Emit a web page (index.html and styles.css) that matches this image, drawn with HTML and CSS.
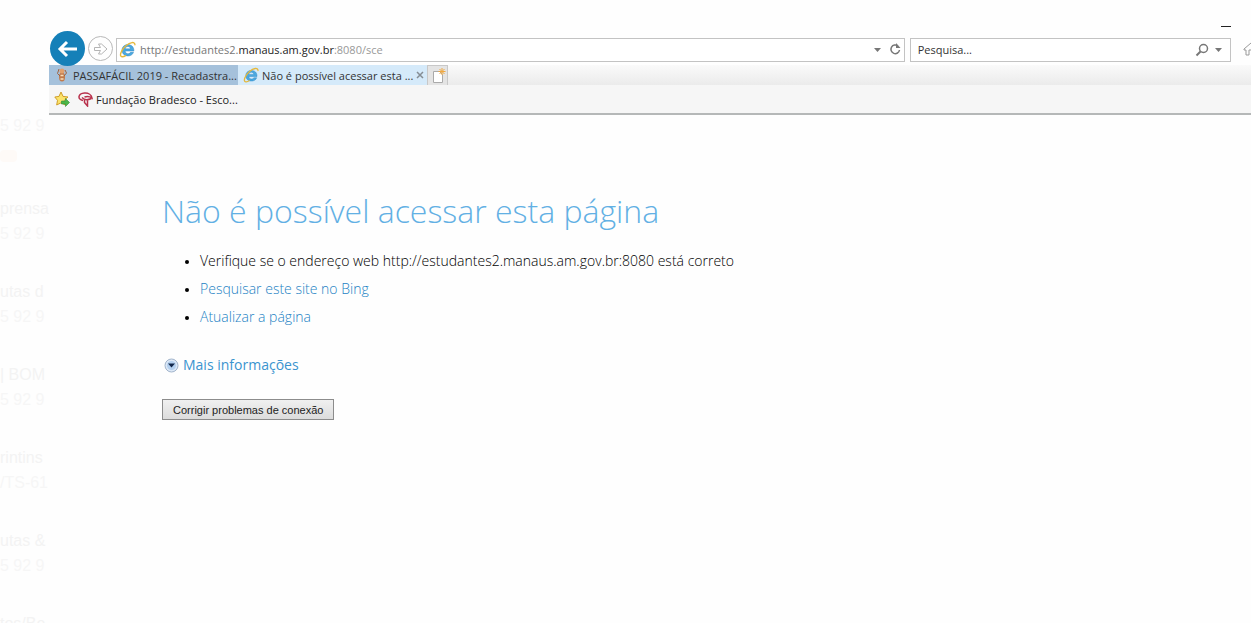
FILE: index.html
```html
<!DOCTYPE html>
<html lang="pt-BR">
<head>
    <meta charset="UTF-8">
    <meta name="viewport" content="width=device-width, initial-scale=1.0">
    <title>Não é possível acessar esta página</title>
    <link rel="stylesheet" href="styles.css">
</head>
<body>
    <!-- Icon shared by the address bar and the tab -->
    <svg class="defs" width="0" height="0" aria-hidden="true">
        <symbol id="ie" viewBox="0 0 16 16">
            <path d="M14 9.500H5.800c.3 3 4 3.200 5 1.200h2.900C12 15.800 2.800 15.200 2.800 8.700 2.800 1.500 14.600 1.500 14 9.500zM5.800 7.400h5C10.500 4.400 6.200 4.400 5.800 7.400z" fill="#4aa8e0" stroke="#2680bd" stroke-width=".4"/>
            <path d="M2.800 14.800C-.5 14.500 2.500 8 6.500 4.500S15 .3 15 3.600M2.800 14.800c1 .2 2.300-.3 3.400-1" fill="none" stroke="#e5b83c" stroke-width="1.300" stroke-linecap="round"/>
        </symbol>
    </svg>

    <div class="screen">
        <aside class="contacts">
            <div class="contact first">
                <p>5 92 9</p>
                <span class="tag"></span>
            </div>
            <div class="contact"><h3>prensa</h3><p>5 92 9</p></div>
            <div class="contact"><h3>utas d</h3><p>5 92 9</p></div>
            <div class="contact"><h3>| BOM</h3><p>5 92 9</p></div>
            <div class="contact"><h3>rintins</h3><p>/TS-61</p></div>
            <div class="contact"><h3>utas &amp;</h3><p>5 92 9</p></div>
            <div class="contact"><h3>tos/Be</h3></div>
        </aside>

        <div class="window">
            <div class="titlebar">
                <button class="minimize" aria-label="Minimizar"></button>
            </div>

            <div class="toolbar">
                <button class="back" aria-label="Voltar">
                    <svg width="22" height="22" viewBox="0 0 22 22"><path d="M20 11H4M10 4l-7 7 7 7" fill="none" stroke="#fff" stroke-width="3"/></svg>
                </button>
                <button class="forward" aria-label="Avançar">
                    <svg width="16" height="14" viewBox="0 0 16 14"><path d="M1.500 5.500h6L5.500 2h3l5.500 5-5.500 5h-3l2-3.500h-6z" fill="#fff" stroke="#b4b4b4"/></svg>
                </button>
                <div class="box address">
                    <svg width="17" height="17"><use href="#ie"/></svg>
                    <span class="url">http://estudantes2.<b>manaus.am.gov.br</b><i>:8080/sce</i></span>
                    <button aria-label="Histórico"><svg width="7" height="4" viewBox="0 0 7 4"><path d="M0 0h7L3.500 4z" fill="#777"/></svg></button>
                    <button aria-label="Atualizar"><svg width="13" height="13" viewBox="0 0 13 13"><path d="M9 3A4.300 4.300 0 1 0 10.500 7" fill="none" stroke="#777" stroke-width="1.500"/><path d="M7 0v5h4.500z" fill="#777"/></svg></button>
                </div>
                <div class="box search">
                    <input type="text" placeholder="Pesquisa..." aria-label="Pesquisa">
                    <button aria-label="Pesquisar"><svg width="14" height="14" viewBox="0 0 14 14"><circle cx="8.500" cy="5.500" r="4" fill="none" stroke="#777" stroke-width="1.500"/><path d="M5.500 8.500L1.500 12.500" stroke="#777" stroke-width="2"/></svg></button>
                    <button aria-label="Provedores"><svg width="7" height="4" viewBox="0 0 7 4"><path d="M0 0h7L3.500 4z" fill="#777"/></svg></button>
                </div>
                <button class="home" aria-label="Página inicial">
                    <svg width="16" height="14" viewBox="0 0 16 14"><path d="M1 7l7-6 7 6v1h-2v5h-3V8H6v5H3V8H1z" fill="none" stroke="#999"/></svg>
                </button>
            </div>

            <div class="tabs">
                <button class="tab">
                    <svg width="14" height="16" viewBox="0 0 14 16"><ellipse cx="7" cy="10" rx="3" ry="4.500" fill="#c07a4c"/><circle cx="7" cy="4" r="2.500" fill="#e2a06c"/><path d="M4 2L2.500 6.500 5 9M10 3l1.500 3L9 9" fill="none" stroke="#a0633f"/><path d="M5.500 8.500h3M5.500 12h3" stroke="#f8dfba" stroke-width="1.500"/></svg>
                    <span>PASSAFÁCIL 2019 - Recadastra...</span>
                </button>
                <button class="tab current">
                    <svg width="16" height="16"><use href="#ie"/></svg>
                    <span>Não é possível acessar esta ...</span>
                    <svg class="close" width="8" height="8" viewBox="0 0 8 8"><path d="M1 1l6 6M7 1L1 7" stroke="#858d94" stroke-width="1.500"/></svg>
                </button>
                <button class="new-tab" aria-label="Nova guia">
                    <svg width="16" height="16" viewBox="0 0 16 16"><path d="M3.500 3.500h6l3 3v8h-9z" fill="#fff" stroke="#aaa"/><path d="M12 0v7M8.500 3.500h7M9.500 1l5 5M14.500 1l-5 5" stroke="#f0a840" stroke-width="1"/></svg>
                </button>
            </div>

            <div class="favorites">
                <button aria-label="Adicionar a favoritos">
                    <svg width="16" height="16" viewBox="0 0 16 16"><path d="M7 1l2 4.400 5 .6-3.600 3.300.9 4.700L7 11.800 2.700 14l.8-4.700L0.800 6 5 5.400z" fill="#fbe36b" stroke="#cf9e28"/><path d="M7.500 10h4V7.500l4 4-4 4V13h-4z" fill="#4cb748" stroke="#2f8c36" stroke-width=".6"/></svg>
                </button>
                <a href="#">
                    <svg width="15" height="16" viewBox="0 0 15 16"><path d="M5 9.500C-1 8 0 2.500 6.500 2c4-.3 7 2 7.500 5-2-1.500-5-2-7.500-1M4 6.500c2 2.500 6 2.500 9.500 1M6.500 8.500v3l3 3.500V9" fill="none" stroke="#b8304b" stroke-width="1.500"/></svg>
                    Fundação Bradesco - Esco...
                </a>
            </div>

            <main class="page">
                <h1>Não é possível acessar esta página</h1>
                <ul>
                    <li>Verifique se o endereço web http://estudantes2.manaus.am.gov.br:8080 está correto</li>
                    <li><a href="#">Pesquisar este site no Bing</a></li>
                    <li><a href="#">Atualizar a página</a></li>
                </ul>
                <a class="more" href="#">
                    <svg width="15" height="15" viewBox="0 0 15 15"><circle cx="7.500" cy="7.500" r="6.500" fill="#dce8f6" stroke="#a3b5cc"/><circle cx="7.500" cy="7.500" r="4.500" fill="#b4d0ef"/><path d="M4 5.500h7l-3.500 4z" fill="#12284c"/></svg>
                    Mais informações
                </a>
                <button class="fix">Corrigir problemas de conexão</button>
            </main>
        </div>
    </div>
</body>
</html>
```
FILE: styles.css
```css
* {
    box-sizing: border-box;
}
body {
    margin: 0;
    background: #fefefe;
    font-family: "Open Sans", "Noto Sans", sans-serif;
    color: #222;
}
a {
    color: #3a94cf;
    text-decoration: none;
}
button {
    display: flex;
    align-items: center;
    justify-content: center;
    flex: none;
    padding: 0;
    border: none;
    background: none;
    font-family: inherit;
    color: inherit;
}
svg {
    flex: none;
}
.defs {
    position: absolute;
}
.screen {
    display: flex;
    height: 100vh;
    overflow: hidden;
}

/* Faded list behind the window */
.contacts {
    flex: none;
    width: 49px;
    padding-top: 113px;
    overflow: hidden;
    font-family: "Liberation Sans", Arial, sans-serif;
    color: #f3f3f3;
    white-space: nowrap;
}
.contact {
    height: 83px;
}
.contact h3, .contact p {
    margin: 0;
    font-size: 16px;
    font-weight: 400;
    line-height: 25px;
}
.contact p {
    color: #f6f6f6;
}
.tag {
    display: block;
    width: 17px;
    height: 12px;
    margin-top: 12px;
    border-radius: 4px;
    background: #fefaf7;
}

.window {
    flex: 1;
    min-width: 0;
    overflow: hidden;
}
.titlebar {
    display: flex;
    justify-content: flex-end;
    height: 32px;
    padding: 26px 20px 0 0;
}
.minimize {
    width: 10px;
    height: 1px;
    background: #222;
}

/* Navigation */
.toolbar {
    display: flex;
    align-items: center;
    height: 33px;
    padding-left: 1px;
}
.back {
    position: relative;
    width: 35px;
    height: 35px;
    border-radius: 50%;
    background: #1580b8;
}
.forward {
    width: 25px;
    height: 25px;
    margin: 0 3px;
    border: 1px solid #b8b8b8;
    border-radius: 50%;
}
.box {
    display: flex;
    align-items: center;
    min-width: 0;
    height: 24px;
    margin-top: 2px;
    border: 1px solid #c3c3c3;
    background: #fff;
    font-size: 11px;
}
.address {
    flex: 18;
    gap: 8px;
    margin-right: 5px;
    padding: 0 2px;
}
.url {
    flex: 1;
    margin-left: -4px;
    color: #777;
}
.url b {
    font-weight: 500;
    color: #222;
}
.url i {
    font-style: normal;
    color: #999;
}
.search {
    flex: 7;
    gap: 6px;
    padding: 0 8px 0 7px;
}
.search input {
    flex: 1;
    min-width: 0;
    padding: 0;
    border: none;
    outline: none;
    font: inherit;
}
.search input::placeholder {
    color: #333;
}
.home {
    margin: 0 -8px 0 12px;
}

/* Tabs */
.tabs {
    display: flex;
    height: 20px;
    background: linear-gradient(#fafafa, #ebebeb);
}
.tab {
    justify-content: flex-start;
    gap: 4px;
    width: 189px;
    padding: 0 6px;
    background: #a5c1db;
    font-size: 11px;
    color: #333;
    white-space: nowrap;
}
.tab.current {
    padding-left: 5px;
    gap: 3px;
    background: #d5eafa;
}
.close {
    margin-left: auto;
}
.new-tab {
    width: 21px;
    border: 1px solid #c8c8c8;
    border-bottom: none;
    background: #e4e4e4;
}

.favorites {
    display: flex;
    align-items: center;
    gap: 8px;
    height: 30px;
    padding-left: 5px;
    border-bottom: 2px solid #b5b8b8;
    background: #f6f6f6;
}
.favorites a {
    display: flex;
    align-items: center;
    gap: 3px;
    font-size: 11px;
    color: #222;
}

/* Error page */
.page {
    padding: 72px 113px;
}
.page h1 {
    margin: 0 0 12px;
    font-size: 32px;
    font-weight: 300;
    line-height: 48px;
    color: #62b0e4;
}
.page ul {
    margin: 0 0 20px;
    padding-left: 38px;
    font-size: 14px;
    font-weight: 300;
    line-height: 28px;
}
.page li::marker {
    font-size: 11px;
}
.page li {
    color: #000;
}
.page li a {
    color: #1c82c4;
}
.more {
    display: flex;
    align-items: center;
    gap: 4px;
    width: fit-content;
    margin: 0 0 20px 2px;
    font-size: 14px;
    line-height: 28px;
}
.fix {
    height: 21px;
    padding: 0 10px;
    border: 1px solid #8c8c8c;
    background: linear-gradient(#f0f0f0, #dcdcdc);
    font-family: "Liberation Sans", Arial, sans-serif;
    font-size: 11px;
}
```
